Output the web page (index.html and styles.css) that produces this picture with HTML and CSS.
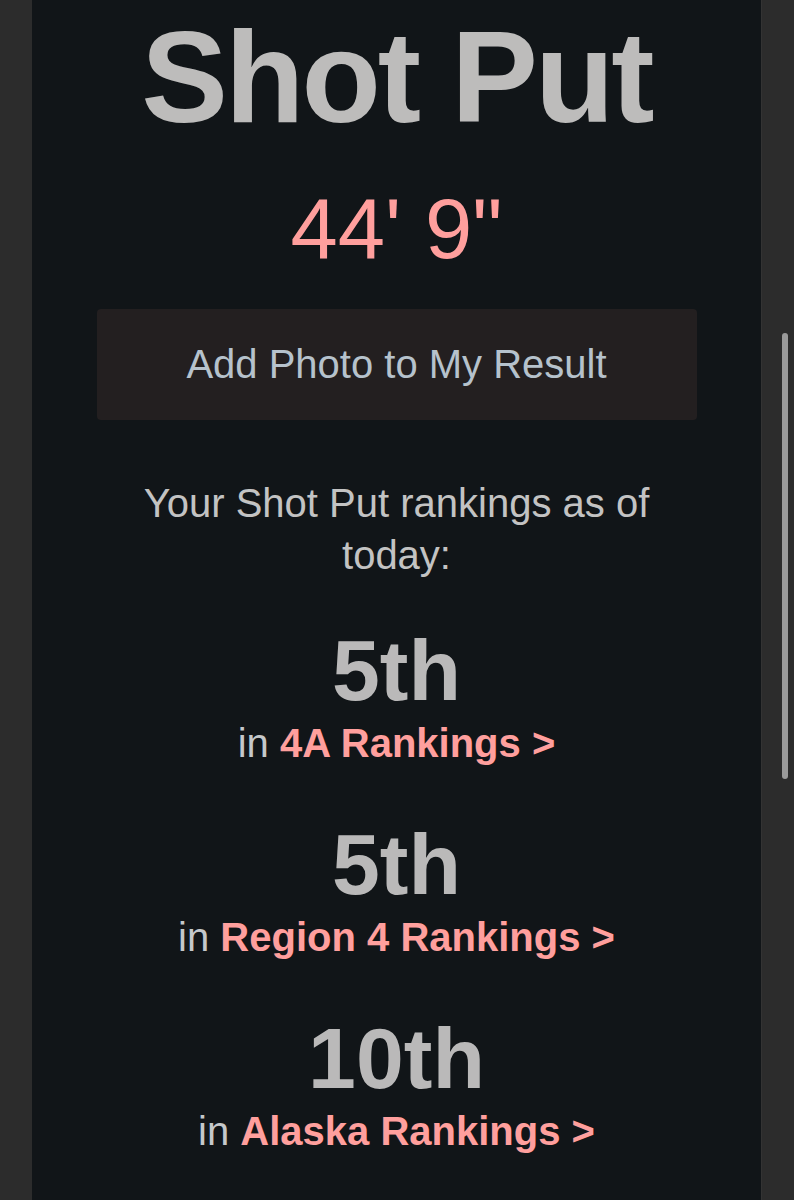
FILE: index.html
```html
<!DOCTYPE html>
<html lang="en">
<head>
    <meta charset="UTF-8">
    <meta name="viewport" content="width=device-width, initial-scale=1.0">
    <title>Shot Put</title>
    <link rel="stylesheet" href="styles.css">
</head>
<body>
    <div class="panel">
        <h1 class="event">Shot Put</h1>
        <div class="mark">44' 9"</div>
        <button class="photo-btn">Add Photo to My Result</button>

        <p class="intro">Your Shot Put rankings as of today:</p>

        <div class="rankings">
            <div class="rank">
                <div class="place">5th</div>
                <div class="scope">in <a href="#">4A Rankings &gt;</a></div>
            </div>
            <div class="rank">
                <div class="place">5th</div>
                <div class="scope">in <a href="#">Region 4 Rankings &gt;</a></div>
            </div>
            <div class="rank">
                <div class="place">10th</div>
                <div class="scope">in <a href="#">Alaska Rankings &gt;</a></div>
            </div>
        </div>
    </div>

    <!-- scrollbar overlay -->
    <div class="scroll-thumb"></div>
</body>
</html>
```

FILE: styles.css
```css
body {
    margin: 0;
    background-color: #2c2c2c;
    font-family: "Liberation Sans", Arial, Helvetica, sans-serif;
}
.panel {
    margin: 0 32px;
    min-height: 1200px;
    background-color: #111518;
    border-right: 1px solid #333333;
    display: flex;
    flex-direction: column;
    align-items: center;
    text-align: center;
    padding-top: 12px;
    box-sizing: border-box;
}
.event {
    margin: 0;
    font-size: 130px;
    line-height: 130px;
    letter-spacing: -3px;
    font-weight: bold;
    color: #bdbcbb;
}
.mark {
    margin-top: 44px;
    font-size: 85px;
    line-height: 85px;
    color: #ff9f9d;
}
.photo-btn {
    margin-top: 38px;
    width: 600px;
    height: 111px;
    border: none;
    border-radius: 4px;
    background-color: #231f20;
    color: #b6c2cc;
    font-family: inherit;
    font-size: 40px;
    cursor: pointer;
}
.intro {
    margin: 57px 0 0;
    width: 600px;
    font-size: 40px;
    line-height: 52px;
    color: #c3c3c3;
}
.rankings {
    margin-top: 46px;
    display: flex;
    flex-direction: column;
    gap: 52px;
}
.place {
    font-size: 86px;
    line-height: 86px;
    font-weight: bold;
    color: #bab9b9;
}
.scope {
    margin-top: 4px;
    font-size: 40px;
    line-height: 52px;
    color: #c5c8cb;
}
.scope a {
    color: #ff9f9d;
    font-weight: bold;
    text-decoration: none;
}
.scroll-thumb {
    position: fixed;
    top: 333px;
    left: 782px;
    width: 6px;
    height: 446px;
    border-radius: 3px;
    background-color: #9a9a9a;
}
```
